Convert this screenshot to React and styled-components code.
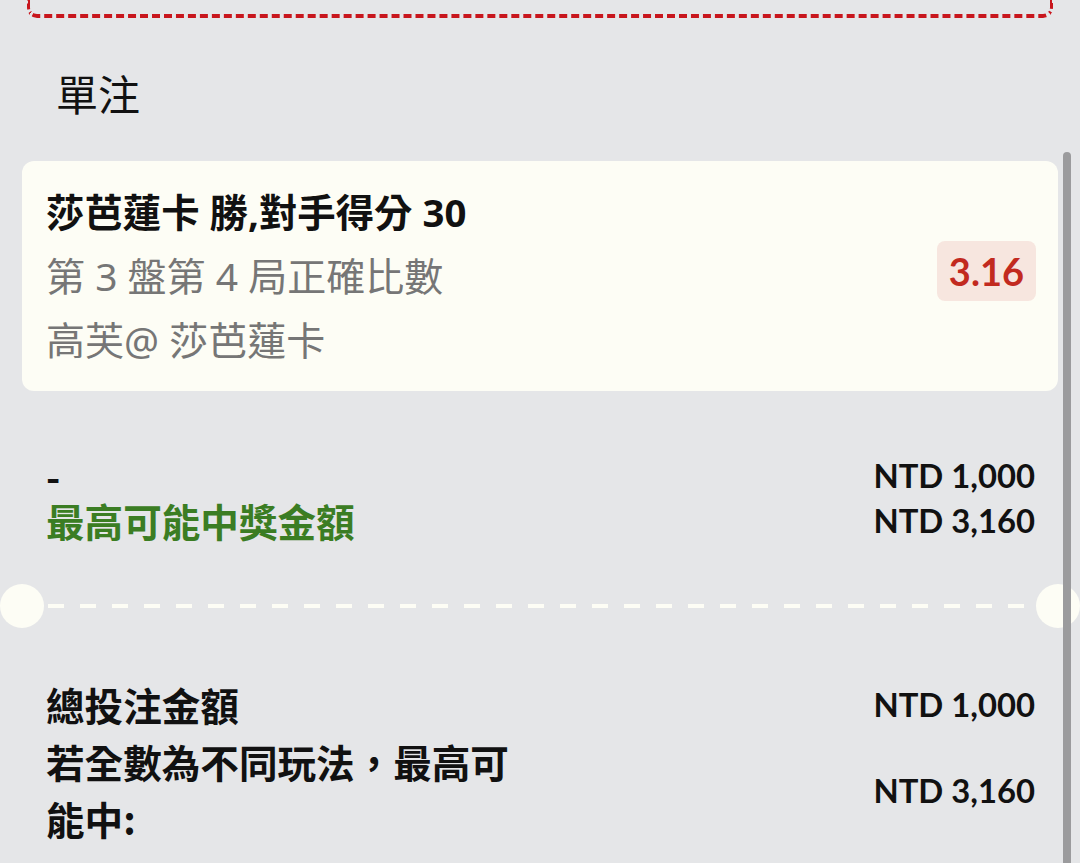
import React from "react";
import styled, { createGlobalStyle } from "styled-components";

const GlobalStyle = createGlobalStyle`
  html, body {
    margin: 0;
    padding: 0;
    background-color: #e5e6e8;
  }
  body {
    font-family: "Noto Sans CJK TC", "Noto Sans", sans-serif;
    color: #111;
    overflow: hidden;
  }
`;

const StyledPage = styled.div`
  position: relative;
  width: 1080px;
  height: 863px;
  overflow: hidden;
  background-color: #e5e6e8;
`;

const StyledPrevSlip = styled.div`
  height: 14px;
  margin: 0 27px;
  border: 3px dashed #c8161d;
  border-bottom-width: 4px;
  border-top: none;
  border-radius: 0 0 10px 10px;
`;

const StyledHeading = styled.h2`
  margin: 50px 0 0 0;
  padding-left: 56px;
  font-size: 42px;
  line-height: 50px;
  font-weight: 400;
  color: #111;
`;

const StyledCard = styled.div`
  display: flex;
  justify-content: space-between;
  align-items: center;
  margin: 43px 22px 0 22px;
  padding: 19px 22px 19px 24px;
  background-color: #fdfdf5;
  border-radius: 12px;
`;

const StyledCardInfo = styled.div`
  display: flex;
  flex-direction: column;
`;

const StyledCardLine = styled.div`
  font-family: "Noto Sans", "Noto Sans CJK TC", sans-serif;
  font-size: ${(props) => (props.$bold ? "38.4px" : "39px")};
  line-height: 64px;
  font-weight: ${(props) => (props.$bold ? 700 : 400)};
  color: ${(props) => (props.$bold ? "#111" : "#767676")};
  white-space: nowrap;
`;

const StyledOdds = styled.div`
  margin-bottom: 10px;
  padding: 0 12px;
  height: 60px;
  line-height: 60px;
  border-radius: 8px;
  background-color: #f7e6df;
  color: #c22a1f;
  font-family: Lato, "Noto Sans", sans-serif;
  font-weight: 700;
  font-size: 38px;
`;

const StyledSummary = styled.div`
  margin: 62px 45px 0 46px;
`;

const StyledRow = styled.div`
  display: flex;
  justify-content: space-between;
  align-items: center;
`;

const StyledLabel = styled.div`
  max-width: ${(props) => props.$maxWidth || "none"};
  font-size: 38.6px;
  line-height: ${(props) => props.$lineHeight || "45px"};
  font-weight: 700;
  color: ${(props) => props.$color || "#111"};
`;

const StyledAmount = styled.div`
  font-family: Lato, "Noto Sans", sans-serif;
  font-weight: 700;
  font-size: 32.8px;
  line-height: 45px;
  color: #111;
  white-space: nowrap;
`;

const StyledDivider = styled.div`
  position: relative;
  margin: 41px 22px 0 22px;
  height: 44px;
  display: flex;
  align-items: center;
  padding: 0 26px;
`;

const StyledDashes = styled.div`
  flex: 1;
  height: 4px;
  background: repeating-linear-gradient(
    90deg,
    #fdfdf5 0 16px,
    transparent 16px 32px
  );
`;

const StyledNotch = styled.div`
  position: absolute;
  top: 0;
  ${(props) => (props.$side === "left" ? "left: -22px;" : "right: -22px;")}
  width: 44px;
  height: 44px;
  border-radius: 50%;
  background-color: #fdfdf5;
`;

const StyledTotals = styled.div`
  margin: 48px 45px 0 46px;
`;

const StyledScrollbar = styled.div`
  position: absolute;
  top: 152px;
  right: 9px;
  width: 8px;
  height: 760px;
  border-radius: 4px;
  background-color: #9b9b9d;
`;

function App() {
  return (
    <StyledPage>
      <GlobalStyle />
      <StyledPrevSlip />
      <StyledHeading>單注</StyledHeading>

      <StyledCard>
        <StyledCardInfo>
          <StyledCardLine $bold>莎芭蓮卡 勝,對手得分 30</StyledCardLine>
          <StyledCardLine>第 3 盤第 4 局正確比數</StyledCardLine>
          <StyledCardLine>高芙@ 莎芭蓮卡</StyledCardLine>
        </StyledCardInfo>
        <StyledOdds>3.16</StyledOdds>
      </StyledCard>

      <StyledSummary>
        <StyledRow>
          <StyledLabel>-</StyledLabel>
          <StyledAmount>NTD 1,000</StyledAmount>
        </StyledRow>
        <StyledRow>
          <StyledLabel $color="#3b7d23">最高可能中獎金額</StyledLabel>
          <StyledAmount>NTD 3,160</StyledAmount>
        </StyledRow>
      </StyledSummary>

      <StyledDivider>
        <StyledNotch $side="left" />
        <StyledDashes />
        <StyledNotch $side="right" />
      </StyledDivider>

      <StyledTotals>
        <StyledRow>
          <StyledLabel $lineHeight="57px">總投注金額</StyledLabel>
          <StyledAmount>NTD 1,000</StyledAmount>
        </StyledRow>
        <StyledRow>
          <StyledLabel $lineHeight="57px" $maxWidth="480px">
            若全數為不同玩法，最高可能中:
          </StyledLabel>
          <StyledAmount>NTD 3,160</StyledAmount>
        </StyledRow>
      </StyledTotals>

      <StyledScrollbar />
    </StyledPage>
  );
}

export default App;
